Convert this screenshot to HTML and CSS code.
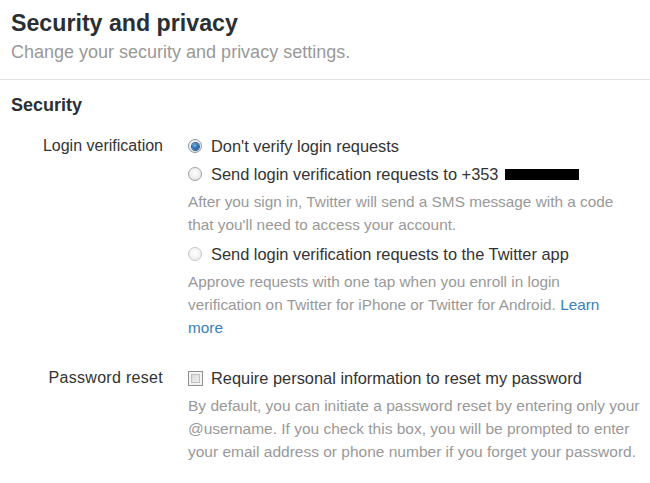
FILE: index.html
```html
<!DOCTYPE html>
<html>
<head>
<meta charset="utf-8">
<link rel="stylesheet" href="styles.css">
</head>
<body>
<div class="header">
  <h1 class="title">Security and privacy</h1>
  <p class="subtitle">Change your security and privacy settings.</p>
</div>
<div class="content">
  <h2 class="section">Security</h2>
  <div class="row">
    <div class="label">Login verification</div>
    <div class="controls">
      <div class="option"><span class="radio checked"><span class="dot"></span></span><span>Don't verify login requests</span></div>
      <div class="option"><span class="radio"></span><span>Send login verification requests to +353</span><span class="redact"></span></div>
      <p class="help spaced">After you sign in, Twitter will send a SMS message with a code<br>that you'll need to access your account.</p>
      <div class="option"><span class="radio faint"></span><span>Send login verification requests to the Twitter app</span></div>
      <p class="help">Approve requests with one tap when you enroll in login<br>verification on Twitter for iPhone or Twitter for Android. <a class="link" href="#">Learn<br>more</a></p>
    </div>
  </div>
  <div class="row row-gap">
    <div class="label label-wide">Password reset</div>
    <div class="controls">
      <div class="option"><span class="check"></span><span>Require personal information to reset my password</span></div>
      <p class="help condensed">By default, you can initiate a password reset by entering only your<br>@username. If you check this box, you will be prompted to enter<br>your email address or phone number if you forget your password.</p>
    </div>
  </div>
</div>
</body>
</html>
```
FILE: styles.css
```css
html, body {
  margin: 0;
  padding: 0;
  background: #fff;
  font-family: "Liberation Sans", Arial, sans-serif;
  color: #333;
}
.header {
  padding: 10px 11px 0 11px;
  height: 69px;
  border-bottom: 1px solid #e1e1e1;
}
.title {
  margin: 0;
  font-size: 23.2px;
  line-height: 26px;
  font-weight: bold;
  color: #292f33;
}
.subtitle {
  margin: 5px 0 0 0;
  font-size: 18px;
  line-height: 22px;
  color: #999;
}
.content {
  padding: 0 0 0 11px;
}
.section {
  margin: 0;
  padding-top: 14px;
  font-size: 18px;
  line-height: 22px;
  font-weight: bold;
  color: #292f33;
}
.row {
  display: grid;
  grid-template-columns: 152px 1fr;
  column-gap: 25px;
  margin-top: 18px;
}
.row-gap {
  margin-top: 23px;
}
.label {
  text-align: right;
  font-size: 16px;
  line-height: 24px;
  color: #333;
}
.label-wide {
  letter-spacing: 0.3px;
}
.controls {
  display: flex;
  flex-direction: column;
}
.option {
  display: flex;
  align-items: center;
  font-size: 16.4px;
  line-height: 24px;
  color: #333;
  margin-bottom: 4px;
}
.radio {
  width: 14px;
  height: 14px;
  border-radius: 50%;
  border: 1px solid #a2a2a2;
  background: radial-gradient(circle at 50% 40%, #ffffff 0%, #eeeeee 55%, #d6d6d6 100%);
  margin-right: 9px;
  flex-shrink: 0;
  box-sizing: border-box;
  display: flex;
  align-items: center;
  justify-content: center;
}
.radio.faint {
  border-color: #c6c6c6;
  background: radial-gradient(circle at 50% 40%, #ffffff 0%, #f3f3f3 55%, #e2e2e2 100%);
}
.radio.checked {
  border-color: #8a96a2;
  background: radial-gradient(circle at 50% 40%, #ffffff 0%, #eef0f2 60%, #d2d8de 100%);
}
.dot {
  width: 7px;
  height: 7px;
  border-radius: 50%;
  background: radial-gradient(circle at 40% 35%, #7fb6e6 0%, #2d72b8 45%, #1a4a7e 100%);
  box-shadow: 0 0 0 1px #3b5f82;
}
.check {
  width: 15px;
  height: 15px;
  border: 1px solid #8e8e8e;
  box-sizing: border-box;
  background: linear-gradient(135deg, #d4d4d4, #f6f6f6);
  box-shadow: inset 0 0 0 2px #f4f4f4, inset 0 0 0 3px #c0c0c0;
  margin-right: 8px;
  flex-shrink: 0;
}
.redact {
  display: inline-block;
  width: 74px;
  height: 11px;
  background: #000;
  margin-left: 7px;
}
.help {
  margin: 0 0 4px 0;
  font-size: 15.35px;
  line-height: 23px;
  color: #999;
  white-space: nowrap;
}
.help.spaced {
  margin-bottom: 6px;
}
.help.condensed {
  font-size: 15.5px;
  letter-spacing: 0;
}
.link {
  color: #3a80b8;
  text-decoration: none;
}
```
